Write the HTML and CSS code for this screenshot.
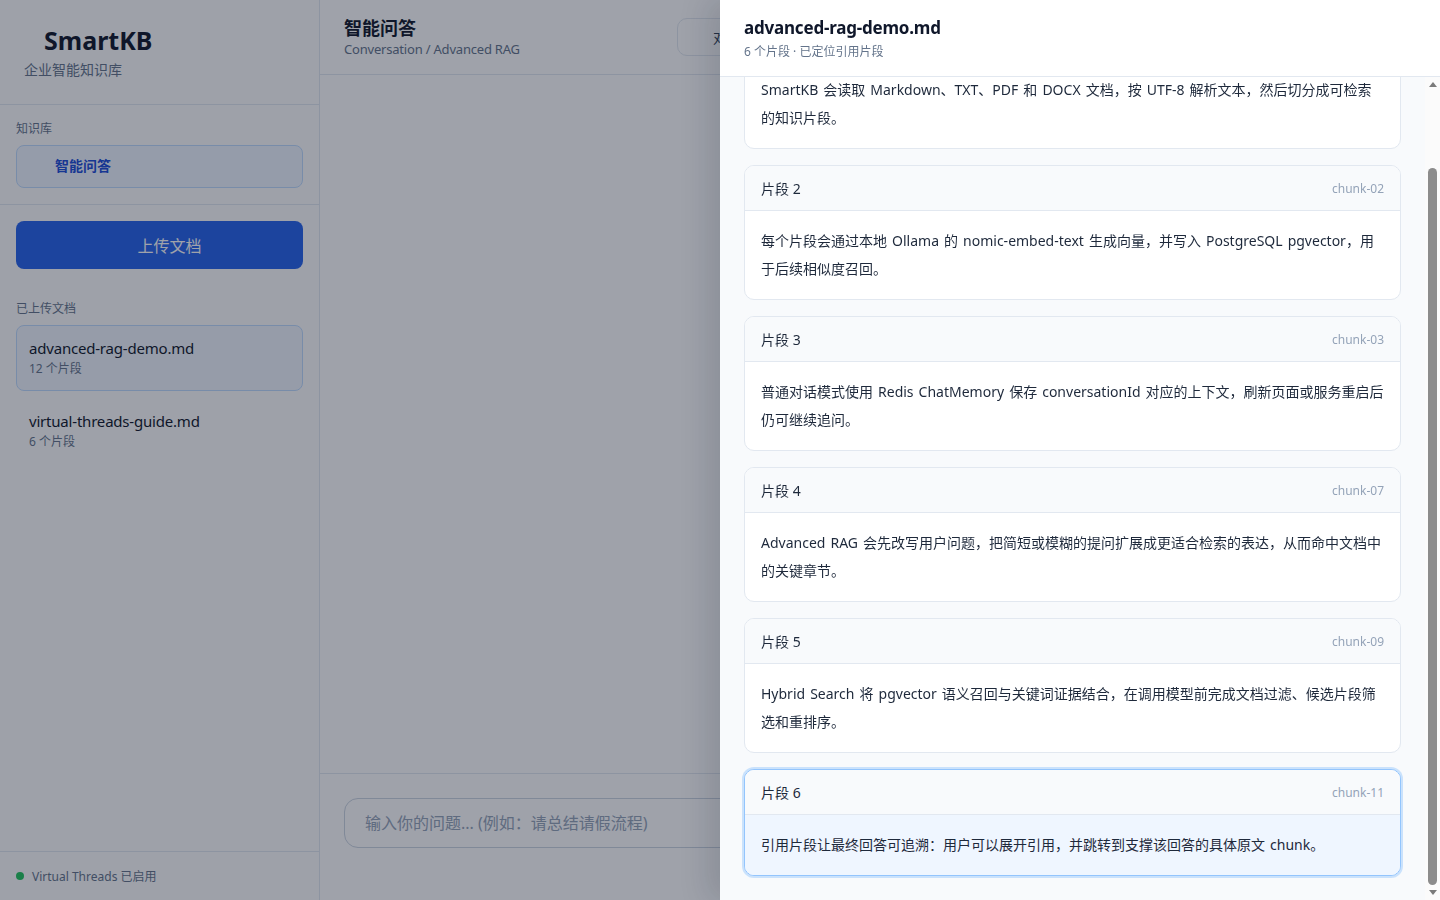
FILE: index.html
```html
<!DOCTYPE html>
<html lang="zh-CN">
<head>
  <meta charset="UTF-8">
  <title>SmartKB - 智能问答</title>
  <link rel="stylesheet" href="styles.css">
</head>
<body>

  <div class="app">
    <aside class="sidebar">
      <div class="brand">
        <h1>SmartKB</h1>
        <p>企业智能知识库</p>
      </div>

      <div class="side-section">
        <div class="side-label">知识库</div>
        <a class="nav-item active" href="#">智能问答</a>
      </div>

      <div class="upload-area">
        <button class="upload-btn">上传文档</button>
      </div>

      <div class="docs">
        <div class="side-label">已上传文档</div>
        <div class="doc-item active">
          <div class="doc-name">advanced-rag-demo.md</div>
          <div class="doc-meta">12 个片段</div>
        </div>
        <div class="doc-item">
          <div class="doc-name">virtual-threads-guide.md</div>
          <div class="doc-meta">6 个片段</div>
        </div>
      </div>

      <div class="side-footer">
        <span class="status-dot"></span>
        Virtual Threads 已启用
      </div>
    </aside>

    <main class="main">
      <header class="main-header">
        <div class="main-title">
          <h2>智能问答</h2>
          <p>Conversation / Advanced RAG</p>
        </div>
        <div class="mode-switch">
          <button class="mode-btn">对话</button>
          <button class="mode-btn">Advanced RAG</button>
        </div>
      </header>

      <section class="messages"></section>

      <footer class="composer">
        <input class="question-input" type="text" placeholder="输入你的问题... (例如：请总结请假流程)">
        <button class="send-btn">发送</button>
      </footer>
    </main>
  </div>

  <!-- 文档片段抽屉 -->
  <div class="overlay"></div>
  <aside class="drawer">
    <div class="drawer-header">
      <h3>advanced-rag-demo.md</h3>
      <p>6 个片段 · 已定位引用片段</p>
    </div>

    <div class="drawer-body">
      <div class="chunk-list" id="chunk-list">
        <div class="chunk">
          <div class="chunk-head"><span>片段 1</span><span class="chunk-id">chunk-01</span></div>
          <div class="chunk-text">SmartKB 会读取 Markdown、TXT、PDF 和 DOCX 文档，按 UTF-8 解析文本，然后切分成可检索的知识片段。</div>
        </div>
        <div class="chunk">
          <div class="chunk-head"><span>片段 2</span><span class="chunk-id">chunk-02</span></div>
          <div class="chunk-text">每个片段会通过本地 Ollama 的 nomic-embed-text 生成向量，并写入 PostgreSQL pgvector，用于后续相似度召回。</div>
        </div>
        <div class="chunk">
          <div class="chunk-head"><span>片段 3</span><span class="chunk-id">chunk-03</span></div>
          <div class="chunk-text">普通对话模式使用 Redis ChatMemory 保存 conversationId 对应的上下文，刷新页面或服务重启后仍可继续追问。</div>
        </div>
        <div class="chunk">
          <div class="chunk-head"><span>片段 4</span><span class="chunk-id">chunk-07</span></div>
          <div class="chunk-text">Advanced RAG 会先改写用户问题，把简短或模糊的提问扩展成更适合检索的表达，从而命中文档中的关键章节。</div>
        </div>
        <div class="chunk">
          <div class="chunk-head"><span>片段 5</span><span class="chunk-id">chunk-09</span></div>
          <div class="chunk-text">Hybrid Search 将 pgvector 语义召回与关键词证据结合，在调用模型前完成文档过滤、候选片段筛选和重排序。</div>
        </div>
        <div class="chunk active">
          <div class="chunk-head"><span>片段 6</span><span class="chunk-id">chunk-11</span></div>
          <div class="chunk-text">引用片段让最终回答可追溯：用户可以展开引用，并跳转到支撑该回答的具体原文 chunk。</div>
        </div>
      </div>

      <div class="scroll-track">
        <span class="scroll-arrow up"></span>
        <div class="scroll-rail" id="scroll-rail">
          <div class="scroll-thumb" id="scroll-thumb"></div>
        </div>
        <span class="scroll-arrow down"></span>
      </div>
    </div>
  </aside>

  <script>
    // 打开抽屉时滚动到被引用的片段，并同步滚动条位置
    const chunkList = document.getElementById('chunk-list');
    const rail = document.getElementById('scroll-rail');
    const thumb = document.getElementById('scroll-thumb');

    chunkList.scrollTop = chunkList.scrollHeight;

    const total = chunkList.scrollHeight;
    thumb.style.height = (rail.clientHeight * chunkList.clientHeight / total) + 'px';
    thumb.style.marginTop = (rail.clientHeight * chunkList.scrollTop / total) + 'px';
  </script>

</body>
</html>
```

FILE: styles.css
```css
* {
  box-sizing: border-box;
}

body {
  font-family: 'Noto Sans', 'Noto Sans CJK SC', sans-serif;
  color: #0f172a;
  background-color: #ffffff;
  margin: 0;
  padding: 0;
  height: 100vh;
  overflow: hidden;
}

button,
input {
  font-family: inherit;
}

.app {
  display: flex;
  height: 100vh;
}

/* 侧边栏 */
.sidebar {
  width: 320px;
  flex-shrink: 0;
  display: flex;
  flex-direction: column;
  background-color: #fdfdfe;
  border-right: 1px solid #e2e8f0;
}

.brand {
  padding: 24px;
  border-bottom: 1px solid #e2e8f0;
}

.brand h1 {
  margin: 0 0 0 20px;
  font-size: 25px;
  line-height: 32px;
  font-weight: 700;
  color: #0f172a;
}

.brand p {
  margin: 4px 0 0;
  font-size: 14px;
  line-height: 20px;
  color: #64748b;
}

.side-section {
  padding: 16px;
  border-bottom: 1px solid #e2e8f0;
}

.side-label {
  font-size: 12px;
  line-height: 16px;
  color: #64748b;
  margin-bottom: 8px;
}

.nav-item {
  display: block;
  height: 43px;
  line-height: 40px;
  padding-left: 38px;
  border: 1px solid #bfdbfe;
  border-radius: 8px;
  background-color: #eff6ff;
  color: #1d4ed8;
  font-size: 14px;
  font-weight: 700;
  text-decoration: none;
}

.upload-area {
  padding: 16px 16px 0;
}

.upload-btn {
  width: 100%;
  height: 48px;
  padding-left: 26px;
  border: none;
  border-radius: 8px;
  background-color: #2563eb;
  color: #ffffff;
  font-size: 16px;
  cursor: pointer;
}

.docs {
  flex: 1;
  padding: 32px 16px 16px;
}

.doc-item {
  padding: 12px;
  border: 1px solid transparent;
  border-radius: 8px;
  margin-bottom: 7px;
}

.doc-item.active {
  border-color: #bfdbfe;
  background-color: #f1f6fe;
}

.doc-name {
  font-size: 15px;
  line-height: 20px;
  color: #0f172a;
  letter-spacing: -0.2px;
}

.doc-meta {
  margin-top: 2px;
  font-size: 12px;
  line-height: 18px;
  color: #64748b;
}

.side-footer {
  height: 49px;
  display: flex;
  align-items: center;
  gap: 8px;
  padding: 0 16px;
  border-top: 1px solid #e2e8f0;
  font-size: 12px;
  color: #64748b;
}

.status-dot {
  width: 8px;
  height: 8px;
  border-radius: 50%;
  background-color: #22c55e;
}

/* 主区域 */
.main {
  flex: 1;
  display: flex;
  flex-direction: column;
  background-color: #ffffff;
  min-width: 0;
}

.main-header {
  display: flex;
  align-items: center;
  padding: 16px 24px;
  border-bottom: 1px solid #e2e8f0;
  height: 75px;
}

.main-title {
  width: 333px;
}

.main-title h2 {
  margin: 0;
  font-size: 18px;
  line-height: 24px;
  font-weight: 700;
}

.main-title p {
  margin: 0;
  font-size: 13px;
  line-height: 18px;
  color: #64748b;
  letter-spacing: -0.2px;
}

.mode-switch {
  display: flex;
  gap: 8px;
}

.mode-btn {
  height: 38px;
  padding: 0 35px;
  border: 1px solid #e2e8f0;
  border-radius: 10px;
  background-color: #ffffff;
  color: #334155;
  font-size: 14px;
}

.messages {
  flex: 1;
}

.composer {
  display: flex;
  gap: 12px;
  padding: 24px 24px 52px;
  border-top: 1px solid #e2e8f0;
}

.question-input {
  flex: 1;
  height: 50px;
  padding: 0 20px;
  border: 1px solid #cbd5e1;
  border-radius: 14px;
  font-size: 16px;
  color: #0f172a;
}

.question-input::placeholder {
  color: #94a3b8;
}

.send-btn {
  width: 96px;
  border: none;
  border-radius: 12px;
  background-color: #2563eb;
  color: #ffffff;
  font-size: 15px;
}

/* 抽屉 */
.overlay {
  position: fixed;
  inset: 0;
  background-color: rgba(15, 23, 42, 0.4);
}

.drawer {
  position: fixed;
  top: 0;
  right: 0;
  width: 720px;
  height: 100vh;
  display: flex;
  flex-direction: column;
  background-color: #ffffff;
  box-shadow: -12px 0 28px rgba(15, 23, 42, 0.14);
}

.drawer-header {
  flex-shrink: 0;
  padding: 16px 24px;
  border-bottom: 1px solid #e2e8f0;
  height: 77px;
}

.drawer-header h3 {
  margin: 0;
  font-size: 17px;
  line-height: 24px;
  font-weight: 700;
  color: #0f172a;
  letter-spacing: -0.2px;
}

.drawer-header p {
  margin: 3px 0 0;
  font-size: 12px;
  line-height: 18px;
  color: #64748b;
}

.drawer-body {
  flex: 1;
  min-height: 0;
  display: flex;
  background-color: #f8fafc;
}

.chunk-list {
  flex: 1;
  overflow: hidden;
  padding: 24px;
  display: flex;
  flex-direction: column;
  gap: 16px;
}

/* 滚动条 */
.scroll-track {
  width: 15px;
  display: flex;
  flex-direction: column;
  background-color: #fbfbfb;
}

.scroll-arrow {
  height: 15px;
  display: flex;
  align-items: center;
  justify-content: center;
}

.scroll-arrow::before {
  content: '';
  border-left: 4px solid transparent;
  border-right: 4px solid transparent;
}

.scroll-arrow.up::before {
  border-bottom: 5px solid #7b7b7b;
}

.scroll-arrow.down::before {
  border-top: 5px solid #7b7b7b;
}

.scroll-rail {
  flex: 1;
}

.scroll-thumb {
  width: 9px;
  margin: 0 auto;
  border-radius: 5px;
  background-color: #8c8c8c;
}

/* 片段卡片 */
.chunk {
  flex-shrink: 0;
  background-color: #ffffff;
  border: 1px solid #e2e8f0;
  border-radius: 10px;
  overflow: hidden;
}

.chunk-head {
  display: flex;
  justify-content: space-between;
  align-items: center;
  height: 45px;
  padding: 0 16px;
  background-color: #f8fafc;
  border-bottom: 1px solid #e2e8f0;
  font-size: 14px;
  color: #1e293b;
}

.chunk-id {
  font-size: 12px;
  color: #94a3b8;
}

.chunk-text {
  padding: 16px;
  font-size: 14px;
  line-height: 28px;
  word-spacing: 1.4px;
  color: #1e293b;
}

.chunk.active {
  border-color: #93c5fd;
  box-shadow: 0 0 0 2px rgba(147, 197, 253, 0.45);
}

.chunk.active .chunk-text {
  background-color: #eff6ff;
}
```
